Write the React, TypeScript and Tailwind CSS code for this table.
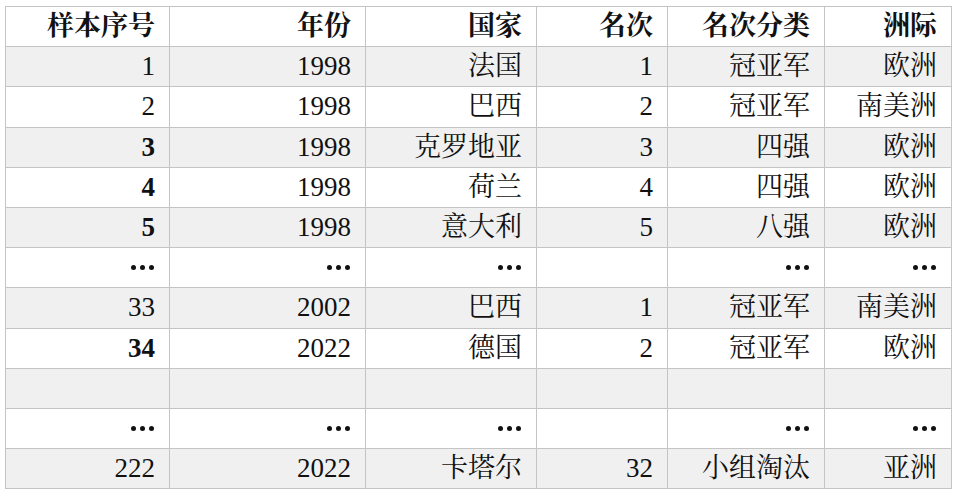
import React from "react";

const widths = ["w-[164px]", "w-[196px]", "w-[171px]", "w-[131px]", "w-[157px]", "w-[127px]"];

type Cell = { t: string; b?: boolean };
const E: Cell = { t: "⋯", b: true };
const rows: { cells: Cell[]; grey: boolean; header?: boolean }[] = [
  { header: true, grey: false, cells: [{ t: "样本序号" }, { t: "年份" }, { t: "国家" }, { t: "名次" }, { t: "名次分类" }, { t: "洲际" }] },
  { grey: true, cells: [{ t: "1" }, { t: "1998" }, { t: "法国" }, { t: "1" }, { t: "冠亚军" }, { t: "欧洲" }] },
  { grey: false, cells: [{ t: "2" }, { t: "1998" }, { t: "巴西" }, { t: "2" }, { t: "冠亚军" }, { t: "南美洲" }] },
  { grey: true, cells: [{ t: "3", b: true }, { t: "1998" }, { t: "克罗地亚" }, { t: "3" }, { t: "四强" }, { t: "欧洲" }] },
  { grey: false, cells: [{ t: "4", b: true }, { t: "1998" }, { t: "荷兰" }, { t: "4" }, { t: "四强" }, { t: "欧洲" }] },
  { grey: true, cells: [{ t: "5", b: true }, { t: "1998" }, { t: "意大利" }, { t: "5" }, { t: "八强" }, { t: "欧洲" }] },
  { grey: false, cells: [E, E, E, { t: "" }, E, E] },
  { grey: true, cells: [{ t: "33" }, { t: "2002" }, { t: "巴西" }, { t: "1" }, { t: "冠亚军" }, { t: "南美洲" }] },
  { grey: false, cells: [{ t: "34", b: true }, { t: "2022" }, { t: "德国" }, { t: "2" }, { t: "冠亚军" }, { t: "欧洲" }] },
  { grey: true, cells: [{ t: "" }, { t: "" }, { t: "" }, { t: "" }, { t: "" }, { t: "" }] },
  { grey: false, cells: [E, E, E, { t: "" }, E, E] },
  { grey: true, cells: [{ t: "222" }, { t: "2022" }, { t: "卡塔尔" }, { t: "32" }, { t: "小组淘汰" }, { t: "亚洲" }] },
];

export default function App() {
  return (
    <div
      className="w-[957px] h-[497px] bg-white pt-[6px] pl-[5px] text-[#111]"
      style={{ fontFamily: '"Liberation Serif", "Noto Serif CJK SC", "Noto Sans CJK SC", serif' }}
    >
      <div className="flex flex-col w-[947px] border-t border-l border-[#c4c4c4]">
        {rows.map((r, i) => (
          <div key={i} className={`flex h-[40.2px] ${r.grey ? "bg-[#f0f0f0]" : "bg-white"}`}>
            {r.cells.map((c, j) => (
              <div
                key={j}
                className={`${widths[j]} h-full flex items-center justify-end pr-[14px] border-r border-b border-[#c4c4c4] text-[27px] leading-none ${
                  r.header || c.b ? "font-bold" : "font-normal"
                }`}
              >
                {c.t === "⋯" ? (
                  <span className="flex gap-[4px] items-center pr-[1px]">
                    <span className="w-[5px] h-[5px] rounded-full bg-[#111]" />
                    <span className="w-[5px] h-[5px] rounded-full bg-[#111]" />
                    <span className="w-[5px] h-[5px] rounded-full bg-[#111]" />
                  </span>
                ) : (
                  c.t
                )}
              </div>
            ))}
          </div>
        ))}
      </div>
    </div>
  );
}
